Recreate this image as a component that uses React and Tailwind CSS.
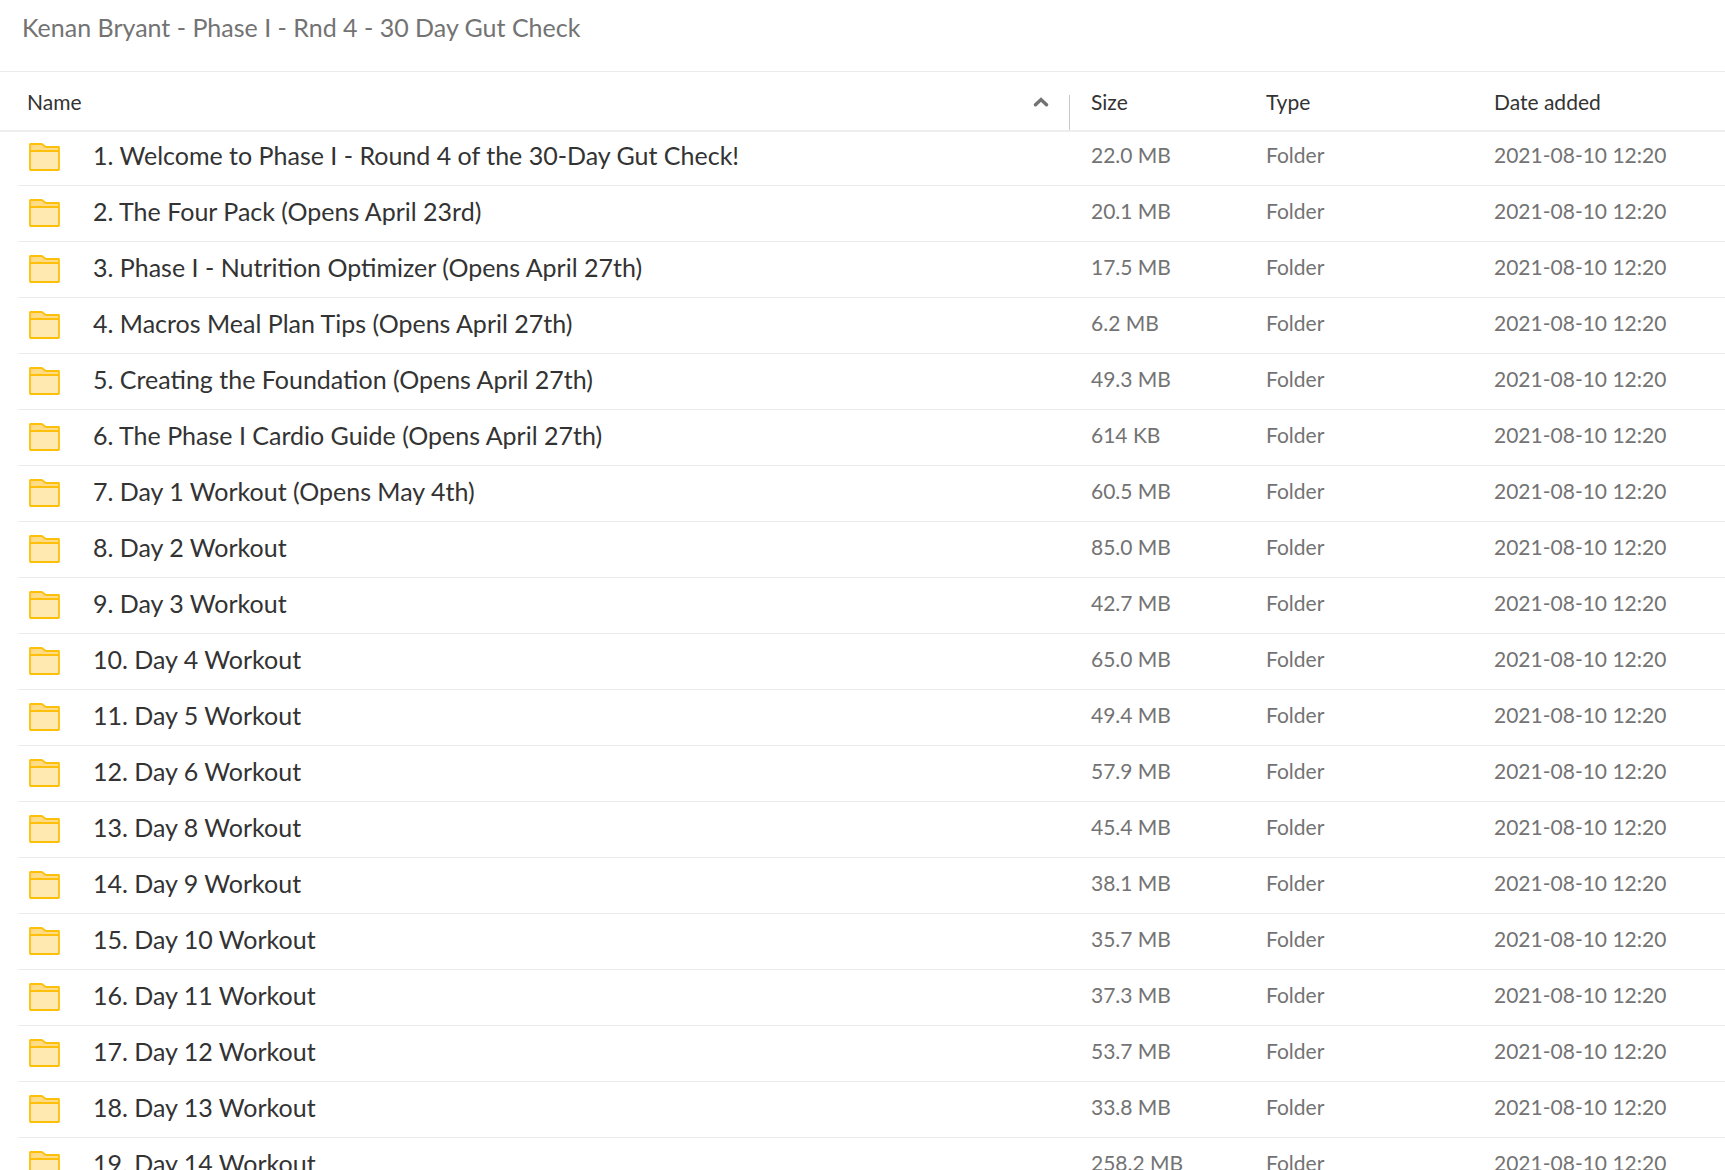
import React from 'react';

const DATE = '2021-08-10 12:20';

const folders = [
  { name: '1. Welcome to Phase I - Round 4 of the 30-Day Gut Check!', size: '22.0 MB' },
  { name: '2. The Four Pack (Opens April 23rd)', size: '20.1 MB' },
  { name: '3. Phase I - Nutrition Optimizer (Opens April 27th)', size: '17.5 MB' },
  { name: '4. Macros Meal Plan Tips (Opens April 27th)', size: '6.2 MB' },
  { name: '5. Creating the Foundation (Opens April 27th)', size: '49.3 MB' },
  { name: '6. The Phase I Cardio Guide (Opens April 27th)', size: '614 KB' },
  { name: '7. Day 1 Workout (Opens May 4th)', size: '60.5 MB' },
  { name: '8. Day 2 Workout', size: '85.0 MB' },
  { name: '9. Day 3 Workout', size: '42.7 MB' },
  { name: '10. Day 4 Workout', size: '65.0 MB' },
  { name: '11. Day 5 Workout', size: '49.4 MB' },
  { name: '12. Day 6 Workout', size: '57.9 MB' },
  { name: '13. Day 8 Workout', size: '45.4 MB' },
  { name: '14. Day 9 Workout', size: '38.1 MB' },
  { name: '15. Day 10 Workout', size: '35.7 MB' },
  { name: '16. Day 11 Workout', size: '37.3 MB' },
  { name: '17. Day 12 Workout', size: '53.7 MB' },
  { name: '18. Day 13 Workout', size: '33.8 MB' },
  { name: '19. Day 14 Workout', size: '258.2 MB' },
];

const FolderIcon = () => (
  <svg width="31" height="28" viewBox="0 0 31 28" className="shrink-0" aria-hidden="true">
    <path d="M1 8V1.500H12.500L17 4H30V8Z" fill="#ffdc85" />
    <path d="M1 8H30V27H1Z" fill="#ffe9b0" />
    <path d="M1 8H30M1.500 1H12.500C14.500 1 15 4 17.500 4H29.500Q30 4 30 4.500V26.500Q30 27 29.500 27H1.500Q1 27 1 26.500V1.500Q1 1 1.500 1Z"
      fill="none" stroke="#fcc008" strokeWidth="1.800" />
  </svg>
);

const SortArrow = () => (
  <svg width="16" height="10" viewBox="0 0 16 10" aria-hidden="true">
    <path d="M2.500 7.800L8 2.500L13.500 7.800" fill="none" stroke="#737373" strokeWidth="3.400" strokeLinecap="round" strokeLinejoin="miter" />
  </svg>
);

const Meta = ({ children }) => (
  <td className="p-0">
    <div className="flex h-14 items-center border-b border-[#ececec] pb-1.5 text-[21px] leading-7 text-[#737373]">{children}</div>
  </td>
);

export default function App() {
  return (
    <div className="h-screen overflow-hidden bg-white font-['Lato',sans-serif]">
      <header className="flex h-[72px] items-start border-b border-[#ececec] px-[22px] pt-[11px]">
        <h1 className="text-[25px] leading-8 text-[#737373]">Kenan Bryant - Phase I - Rnd 4 - 30 Day Gut Check</h1>
      </header>

      <table className="w-full table-fixed border-separate border-spacing-0">
        <colgroup>
          <col />
          <col className="w-[175px]" />
          <col className="w-[228px]" />
          <col className="w-[231px]" />
        </colgroup>
        <thead>
          <tr className="h-[58px] text-left text-[21px] leading-7 text-[#333] shadow-[0_2px_0_#eeeeee]">
            <th className="p-0 font-normal" aria-sort="ascending">
              <div className="flex h-[58px] items-end pr-[21px]">
                <button className="flex h-full flex-1 items-center justify-between pt-0.5 pr-5 pl-[27px]">
                  Name
                  <SortArrow />
                </button>
                <div className="h-[35px] w-px bg-[#c8c8c8]" />
              </div>
            </th>
            <th className="p-0 pt-0.5 font-normal"><button>Size</button></th>
            <th className="p-0 pt-0.5 font-normal"><button>Type</button></th>
            <th className="p-0 pt-0.5 font-normal"><button>Date added</button></th>
          </tr>
        </thead>
        <tbody>
          {folders.map((f) => (
            <tr key={f.name}>
              <td className="p-0 pl-[18px]">
                <div className="flex h-14 items-center gap-[33px] border-b border-[#ececec] pb-px pl-[11px]">
                  <FolderIcon />
                  <span className="truncate pb-1 text-[25px] leading-8 text-[#333]">{f.name}</span>
                </div>
              </td>
              <Meta>{f.size}</Meta>
              <Meta>Folder</Meta>
              <Meta>{DATE}</Meta>
            </tr>
          ))}
        </tbody>
      </table>
    </div>
  );
}
